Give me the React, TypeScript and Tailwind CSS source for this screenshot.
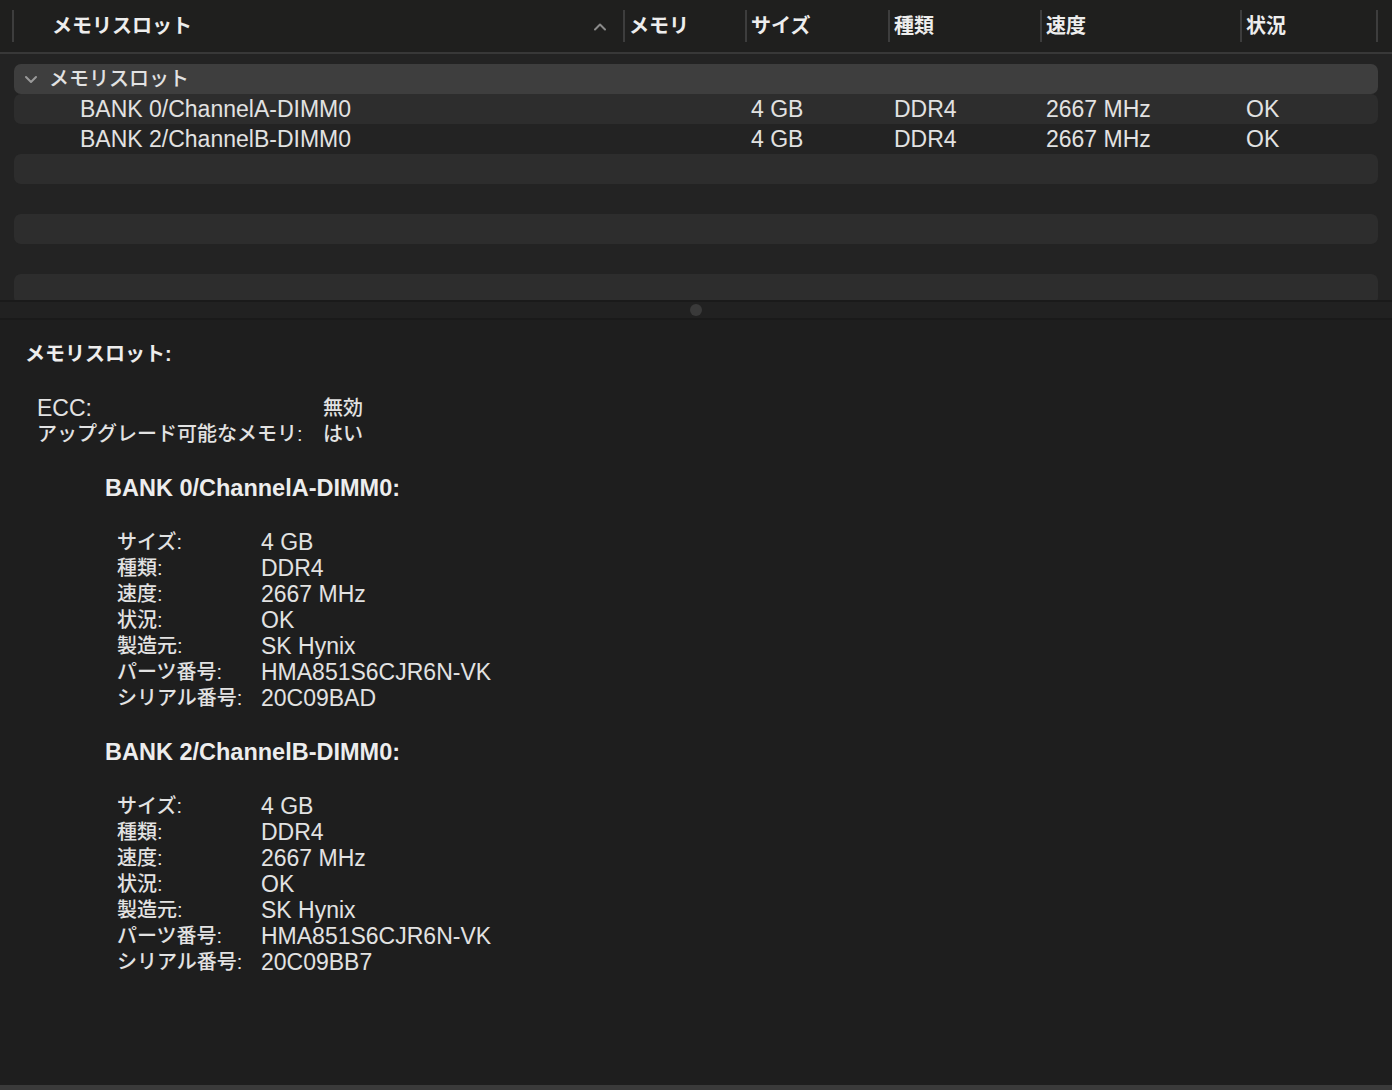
import React from "react";

const J = ({ children, className = "" }: { children: React.ReactNode; className?: string }) => (
  <span className={"text-[20px] " + className}>{children}</span>
);

function Chevron({ up = false }: { up?: boolean }) {
  return (
    <svg width="14" height="9" viewBox="0 0 14 9" fill="none">
      {up ? (
        <path d="M2 7.5 L7 2.5 L12 7.5" stroke="#8a8a8a" strokeWidth="2" strokeLinecap="round" strokeLinejoin="round" />
      ) : (
        <path d="M2 2 L7 7 L12 2" stroke="#9a9a9a" strokeWidth="2" strokeLinecap="round" strokeLinejoin="round" />
      )}
    </svg>
  );
}

const rows = [
  { name: "BANK 0/ChannelA-DIMM0", size: "4 GB", type: "DDR4", speed: "2667 MHz", status: "OK" },
  { name: "BANK 2/ChannelB-DIMM0", size: "4 GB", type: "DDR4", speed: "2667 MHz", status: "OK" },
];

const banks = [
  { name: "BANK 0/ChannelA-DIMM0:", serial: "20C09BAD" },
  { name: "BANK 2/ChannelB-DIMM0:", serial: "20C09BB7" },
];

function HeaderCell({ w, children }: { w: string; children?: React.ReactNode }) {
  return (
    <div className={`${w} h-[32px] flex items-center border-l-2 border-[#3d3d3d] pl-[4px]`}>
      {children}
    </div>
  );
}

function Cell({ children }: { children: React.ReactNode }) {
  return <div className="h-[26px] flex items-center whitespace-nowrap">{children}</div>;
}

export default function App() {
  return (
    <div className="w-[1392px] h-[1090px] overflow-hidden bg-[#1e1e1e] text-[#e2e2e2] font-['Liberation_Sans','Noto_Sans_CJK_JP',sans-serif] text-[23px] leading-[26px]">
      {/* Header */}
      <div className="h-[52px] bg-[#1f1f1e] flex items-center text-[#ededed] font-bold">
        <div className="w-[12px]" />
        <div className="w-[611px] h-[32px] flex items-center justify-between border-l-2 border-[#3d3d3d] pl-[38px] pr-[16px]">
          <J>メモリスロット</J>
          <Chevron up />
        </div>
        <HeaderCell w="w-[122px]"><J>メモリ</J></HeaderCell>
        <HeaderCell w="w-[143px]"><J>サイズ</J></HeaderCell>
        <HeaderCell w="w-[152px]"><J>種類</J></HeaderCell>
        <HeaderCell w="w-[200px]"><J>速度</J></HeaderCell>
        <HeaderCell w="w-[136px]"><J>状況</J></HeaderCell>
        <div className="flex-1 h-[32px] border-l-2 border-[#3d3d3d]" />
      </div>
      <div className="h-[2px] bg-[#383838]" />

      {/* Table body */}
      <div className="h-[246px] bg-[#232323] overflow-hidden pt-[10px] px-[14px] flex flex-col">
        <div className="h-[30px] shrink-0 rounded-[7px] bg-[#3e3e3e] flex items-center pl-[10px] gap-[11px]">
          <Chevron />
          <J className="font-medium">メモリスロット</J>
        </div>
        {rows.map((r, i) => (
          <div
            key={r.name}
            className={`h-[30px] shrink-0 rounded-[7px] grid grid-cols-[731px_143px_152px_200px_1fr] items-center ${i === 0 ? "bg-[#2d2d2d]" : ""}`}
          >
            <div className="pl-[66px]">{r.name}</div>
            <div className="pl-[6px]">{r.size}</div>
            <div className="pl-[6px]">{r.type}</div>
            <div className="pl-[6px]">{r.speed}</div>
            <div className="pl-[6px]">{r.status}</div>
          </div>
        ))}
        {[0, 1, 2, 3, 4].map((i) => (
          <div key={i} className={`h-[30px] shrink-0 rounded-[7px] ${i % 2 === 0 ? "bg-[#2d2d2d]" : ""}`} />
        ))}
      </div>

      {/* Divider */}
      <div className="h-[20px] bg-[#212121] border-t-2 border-b-2 border-[#1a1a1a] flex items-center justify-center">
        <div className="w-[12px] h-[12px] rounded-full bg-[#3a3a3a]" />
      </div>

      {/* Detail */}
      <div className="h-[765px] bg-[#1e1e1e] pt-[21px] pl-[25px]">
        <div className="h-[26px] flex items-center font-bold text-[#ededed]"><J>メモリスロット:</J></div>
        <div className="mt-[28px] pl-[12px] grid grid-cols-[286px_auto] w-fit">
          <Cell>ECC:</Cell>
          <Cell><J className="font-medium">無効</J></Cell>
          <Cell><J className="font-medium">アップグレード可能なメモリ:</J></Cell>
          <Cell><J className="font-medium">はい</J></Cell>
        </div>
        {banks.map((b) => (
          <div key={b.name} className="pl-[80px]">
            <div className="mt-[28px] h-[26px] flex items-center font-bold text-[#ededed] text-[23.5px] whitespace-nowrap">{b.name}</div>
            <div className="mt-[28px] pl-[12px] grid grid-cols-[144px_auto] w-fit">
              <Cell><J className="font-medium">サイズ:</J></Cell>
              <Cell>4 GB</Cell>
              <Cell><J className="font-medium">種類:</J></Cell>
              <Cell>DDR4</Cell>
              <Cell><J className="font-medium">速度:</J></Cell>
              <Cell>2667 MHz</Cell>
              <Cell><J className="font-medium">状況:</J></Cell>
              <Cell>OK</Cell>
              <Cell><J className="font-medium">製造元:</J></Cell>
              <Cell>SK Hynix</Cell>
              <Cell><J className="font-medium">パーツ番号:</J></Cell>
              <Cell>HMA851S6CJR6N-VK</Cell>
              <Cell><J className="font-medium">シリアル番号:</J></Cell>
              <Cell>{b.serial}</Cell>
            </div>
          </div>
        ))}
      </div>
      <div className="h-[5px] bg-[#3a3a3a]" />
    </div>
  );
}
